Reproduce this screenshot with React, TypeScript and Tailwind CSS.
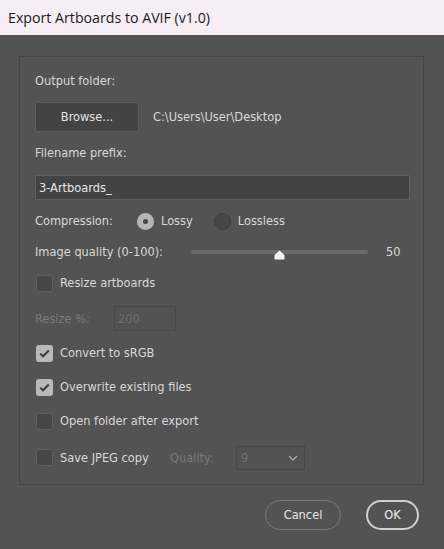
import React from "react";

const font = { fontFamily: '"DejaVu Sans Condensed", "DejaVu Sans", sans-serif' };

function Check({ checked }: { checked?: boolean }) {
  return checked ? (
    <div className="w-[17px] h-[17px] rounded-[3px] bg-[#b9b9b9] flex items-center justify-center shrink-0">
      <svg width="11" height="9" viewBox="0 0 11 9">
        <path d="M1.2 4.6 L4 7.3 L9.8 1.5" fill="none" stroke="#3b3b3b" strokeWidth="2" />
      </svg>
    </div>
  ) : (
    <div className="w-[17px] h-[17px] rounded-[3px] bg-[#464646] border border-[#5f5f5f] shrink-0" />
  );
}

function Row({ checked, label, className = "" }: { checked?: boolean; label: string; className?: string }) {
  return (
    <div className={`flex items-center h-[20px] pl-[1px] ${className}`}>
      <Check checked={checked} />
      <span className="ml-[7px] text-[#d8d8d8]">{label}</span>
    </div>
  );
}

export default function App() {
  return (
    <div className="w-[444px] h-[549px] bg-[#535353] flex flex-col text-[12.7px]" style={font}>
      <div className="h-[35px] bg-[#f7edf4] flex items-center pl-[8px] text-[14.2px] text-[#1b1b1b] shrink-0" style={{ fontFamily: '"Open Sans", "Noto Sans", sans-serif' }}>
        Export Artboards to AVIF (v1.0)
      </div>
      <div className="mt-[21px] ml-[19px] w-[405px] h-[429px] border border-[#434343] flex flex-col pl-[15px] pr-[13px] pt-[14px]">
        <div className="h-[20px] flex items-center text-[#d8d8d8]">Output folder:</div>
        <div className="mt-[11px] flex items-center">
          <div className="w-[104px] h-[30px] bg-[#434343] border border-[#5c5c5c] rounded-[3px] flex items-center justify-center text-[#e2e2e2]">Browse...</div>
          <span className="ml-[14px] text-[#d8d8d8]">C:\Users\User\Desktop</span>
        </div>
        <div className="mt-[11px] h-[20px] flex items-center text-[#d8d8d8]">Filename prefix:</div>
        <div className="mt-[12px] h-[25px] bg-[#434343] border border-[#5e5e5e] flex items-center pl-[3px] text-[#e6e6e6]">3-Artboards_</div>
        <div className="mt-[11px] h-[20px] flex items-center text-[#d8d8d8]">
          <span className="w-[102px]">Compression:</span>
          <div className="w-[17px] h-[17px] rounded-full bg-[#b6b6b6] flex items-center justify-center">
            <div className="w-[5px] h-[5px] rounded-full bg-[#474747]" />
          </div>
          <span className="ml-[7px]">Lossy</span>
          <div className="ml-[21px] w-[17px] h-[17px] rounded-full bg-[#474747] border border-[#3d3d3d]" />
          <span className="ml-[7px]">Lossless</span>
        </div>
        <div className="mt-[11px] h-[20px] flex items-center text-[#d8d8d8]">
          <span className="w-[156px]">Image quality (0-100):</span>
          <div className="relative w-[177px] h-[20px] flex items-center">
            <div className="w-full h-[4px] rounded-full bg-[#6b6b6b]" />
            <svg className="absolute left-[83px] top-[8px]" width="11" height="10" viewBox="0 0 11 10">
              <path d="M5.5 0.5 L10.5 5 L10.5 9.5 L0.5 9.5 L0.5 5 Z" fill="#f2f2f2" />
            </svg>
          </div>
          <span className="ml-[18px]">50</span>
        </div>
        <Row label="Resize artboards" className="mt-[11px]" />
        <div className="mt-[13px] h-[25px] flex items-center text-[#7a7a7a]">
          <span className="w-[79px]">Resize %:</span>
          <div className="w-[62px] h-[25px] border border-[#474747] bg-[#525252] flex items-center pl-[3px] text-[#6f6f6f]">200</div>
        </div>
        <Row checked label="Convert to sRGB" className="mt-[12px]" />
        <Row checked label="Overwrite existing files" className="mt-[14px]" />
        <Row label="Open folder after export" className="mt-[14px]" />
        <div className="mt-[15px] h-[24px] flex items-center">
          <div className="flex items-center pl-[1px] w-[135px]">
            <Check />
            <span className="ml-[7px] text-[#d8d8d8]">Save JPEG copy</span>
          </div>
          <span className="w-[66px] text-[#7a7a7a]">Quality:</span>
          <div className="w-[69px] h-[24px] border border-[#474747] bg-[#525252] flex items-center justify-between pl-[4px] pr-[6px] text-[#6f6f6f]">
            <span>9</span>
            <svg width="10" height="6" viewBox="0 0 10 6">
              <path d="M1 1 L5 5 L9 1" fill="none" stroke="#a9a9a9" strokeWidth="1.3" />
            </svg>
          </div>
        </div>
      </div>
      <div className="mt-[15px] flex justify-end pr-[25px] gap-[25px]">
        <div className="w-[76px] h-[30px] rounded-full border border-[#777777] flex items-center justify-center text-[#e6e6e6]">Cancel</div>
        <div className="w-[53px] h-[30px] rounded-full border-2 border-[#d0d0d0] flex items-center justify-center text-[#efefef]">OK</div>
      </div>
    </div>
  );
}
